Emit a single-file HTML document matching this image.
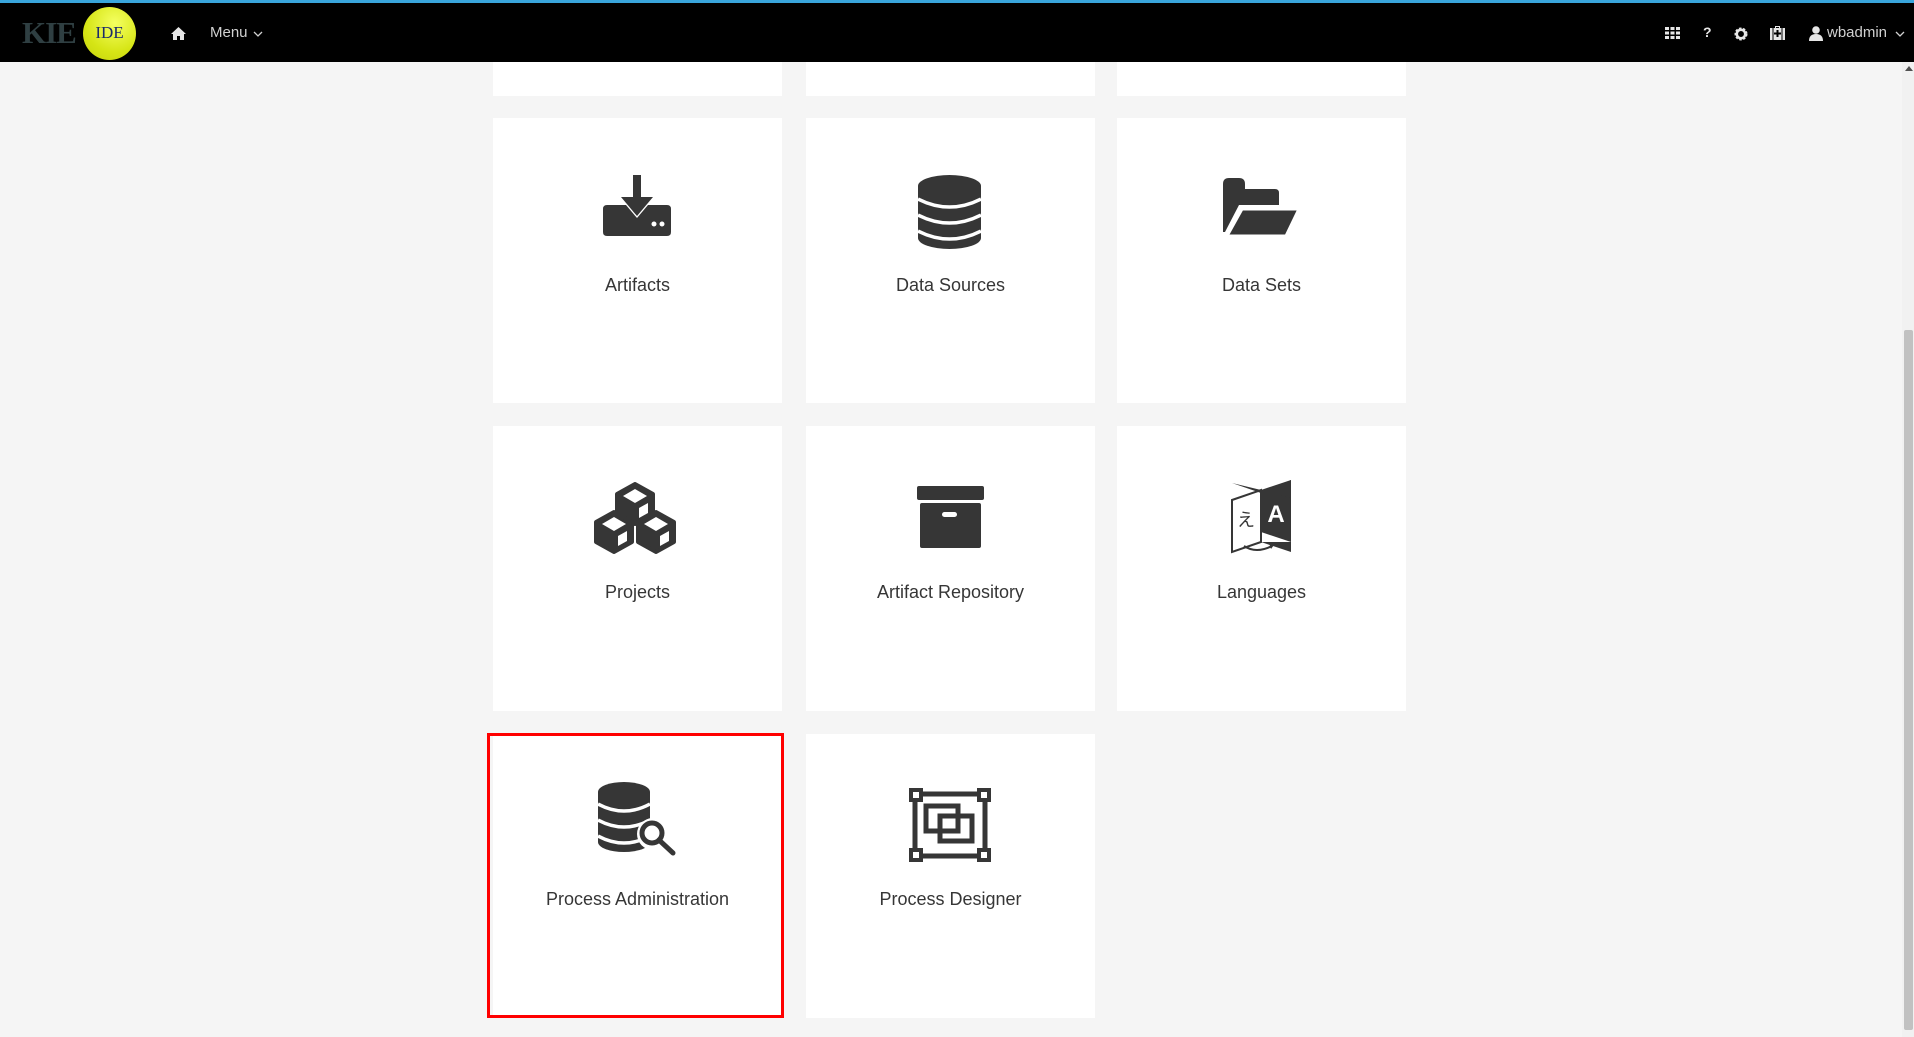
<!DOCTYPE html>
<html><head><meta charset="utf-8"><style>
*{margin:0;padding:0;box-sizing:border-box}
body{width:1914px;height:1037px;overflow:hidden;background:#f5f5f5;font-family:"Liberation Sans",sans-serif;position:relative}
.hdr{position:absolute;left:0;top:0;width:1914px;height:62px;background:#000;border-top:3px solid #39a5dc}
.card{position:absolute;background:#fff;width:289px}
.lbl{position:absolute;width:289px;text-align:center;font-size:18px;color:#363636}
svg{position:absolute}
.t{position:absolute;color:#d1d1d1;font-size:15px}
</style></head><body>
<div class="hdr"></div>
<div style="position:absolute;left:22px;top:15px;font-family:'Liberation Serif',serif;font-size:31px;color:#2f3f42;letter-spacing:-1px;font-weight:bold">KIE</div>
<div style="position:absolute;left:83px;top:7px;width:53px;height:53px;border-radius:50%;background:radial-gradient(circle at 60% 30%,#f4ff60,#d6e515 60%,#c4d10d);"></div>
<div style="position:absolute;left:83px;top:23px;width:53px;text-align:center;font-family:'Liberation Serif',serif;font-size:17px;color:#1b2a6b">IDE</div>
<svg style="left:171px;top:27px" width="15" height="13" viewBox="0 0 15 13"><path d="M7.5 0L0 7h2v6h4V9h3v4h4V7h2z" fill="#e6e6e6"/></svg>
<div class="t" style="left:210px;top:24px">Menu</div>
<svg style="left:253px;top:31px" width="10" height="6" viewBox="0 0 10 6"><path d="M1 1l4 4 4-4" fill="none" stroke="#d1d1d1" stroke-width="1.3"/></svg>
<svg style="left:1665px;top:27px" width="15" height="12" viewBox="0 0 15 12" fill="#e6e6e6"><rect x="0" y="0" width="4" height="3"/><rect x="5.5" y="0" width="4" height="3"/><rect x="11" y="0" width="4" height="3"/><rect x="0" y="4.5" width="4" height="3"/><rect x="5.5" y="4.5" width="4" height="3"/><rect x="11" y="4.5" width="4" height="3"/><rect x="0" y="9" width="4" height="3"/><rect x="5.5" y="9" width="4" height="3"/><rect x="11" y="9" width="4" height="3"/></svg>
<div style="position:absolute;left:1703px;top:24px;color:#e6e6e6;font-size:14px;font-weight:bold">?</div>
<svg style="left:1734px;top:27px" width="14" height="14" viewBox="0 0 14 14"><circle cx="7" cy="7" r="5" fill="none" stroke="#e6e6e6" stroke-width="3" stroke-dasharray="2.2 1.4"/><circle cx="7" cy="7" r="4.2" fill="none" stroke="#e6e6e6" stroke-width="2.5"/></svg>
<svg style="left:1770px;top:26px" width="15" height="14" viewBox="0 0 15 14"><path d="M5 2V0h5v2h5v12H0V2z M6 1v1h3V1z" fill="#e6e6e6"/><path d="M6.5 4h2v2.5H11v2H8.5V11h-2V8.5H4v-2h2.5z" fill="#000"/><rect x="2.5" y="2" width="1" height="12" fill="#000"/><rect x="11.5" y="2" width="1" height="12" fill="#000"/></svg>
<svg style="left:1809px;top:26px" width="14" height="15" viewBox="0 0 14 15"><circle cx="7" cy="4" r="3.8" fill="#e6e6e6"/><path d="M0 15q0-7 7-7t7 7z" fill="#e6e6e6"/></svg>
<div class="t" style="left:1827px;top:24px">wbadmin</div>
<svg style="left:1895px;top:31px" width="10" height="6" viewBox="0 0 10 6"><path d="M1 1l4 4 4-4" fill="none" stroke="#d1d1d1" stroke-width="1.3"/></svg>

<div class="card" style="left:493px;top:62px;height:34px"></div>
<div class="card" style="left:806px;top:62px;height:34px"></div>
<div class="card" style="left:1117px;top:62px;height:34px"></div>

<div class="card" style="left:493px;top:118px;height:285px"></div>
<div class="card" style="left:806px;top:118px;height:285px"></div>
<div class="card" style="left:1117px;top:118px;height:285px"></div>
<div class="card" style="left:493px;top:426px;height:285px"></div>
<div class="card" style="left:806px;top:426px;height:285px"></div>
<div class="card" style="left:1117px;top:426px;height:285px"></div>
<div class="card" style="left:493px;top:734px;height:284px"></div>
<div class="card" style="left:806px;top:734px;height:284px"></div>
<div style="position:absolute;left:487px;top:733px;width:297px;height:285px;border:3px solid #f00"></div>

<div class="lbl" style="left:493px;top:275px">Artifacts</div>
<div class="lbl" style="left:806px;top:275px">Data Sources</div>
<div class="lbl" style="left:1117px;top:275px">Data Sets</div>
<div class="lbl" style="left:493px;top:582px">Projects</div>
<div class="lbl" style="left:806px;top:582px">Artifact Repository</div>
<div class="lbl" style="left:1117px;top:582px">Languages</div>
<div class="lbl" style="left:493px;top:889px">Process Administration</div>
<div class="lbl" style="left:806px;top:889px">Process Designer</div>

<svg style="left:603px;top:175px" width="68" height="61" viewBox="0 0 68 61" fill="#363636"><rect x="30" y="0" width="8" height="22"/><path d="M18 22H50L34 41z"/><path d="M0 34q0-4 4-4h19l11 13l11-13h19q4 0 4 4v23q0 4-4 4H4q-4 0-4-4z"/><circle cx="51" cy="49" r="2.5" fill="#fff"/><circle cx="59" cy="49" r="2.5" fill="#fff"/></svg>
<svg style="left:918px;top:175px" width="63" height="74" viewBox="0 0 63 74"><path d="M0 11a31.5 11 0 0 1 63 0v52a31.5 11 0 0 1-63 0z" fill="#363636"/><g fill="none" stroke="#fff" stroke-width="3.5"><path d="M0 24q31.5 16 63 0"/><path d="M0 40q31.5 16 63 0"/><path d="M0 56q31.5 16 63 0"/></g></svg>
<svg style="left:1223px;top:178px" width="76" height="58" viewBox="0 0 76 58" fill="#363636"><path d="M0 6q0-6 6-6h10q6 0 6 6v5h30q4 0 4 4v12H16L2 54H0z"/><path d="M19 31H76L63 58H4z" stroke="#fff" stroke-width="3"/></svg>
<svg style="left:591px;top:482px" width="88" height="72" viewBox="0 0 88 72"><g fill="#363636" stroke="#363636" stroke-width="4" stroke-linejoin="round"><path d="M44 2L62 12V32L44 42L26 32V12z"/><path d="M23 30L41 40V60L23 70L5 60V40z"/><path d="M65 30L83 40V60L65 70L47 60V40z"/></g><g fill="#fff"><path d="M44 7L56 14L44 21L32 14z"/><path d="M48 26L57 21V31L48 36z"/><path d="M23 35L35 42L23 49L11 42z"/><path d="M27 54L36 49V59L27 64z"/><path d="M65 35L77 42L65 49L53 42z"/><path d="M69 54L78 49V59L69 64z"/></g></svg>
<svg style="left:917px;top:486px" width="67" height="62" viewBox="0 0 67 62" fill="#363636"><rect x="0" y="0" width="67" height="14" rx="2"/><rect x="3" y="17" width="61" height="45" rx="2"/><rect x="25" y="26" width="15" height="5" rx="2.5" fill="#fff"/></svg>
<svg style="left:1229px;top:480px" width="65" height="76" viewBox="0 0 65 76"><path d="M3 20L32 10V62L3 72z" fill="#fff" stroke="#363636" stroke-width="2"/><path d="M32 10L62 0V62L32 52z" fill="#363636"/><path d="M3 3L32 13L62 0V18L32 10z" fill="#363636"/><path d="M32 62L62 72V62z" fill="#363636"/><text x="47" y="42" text-anchor="middle" font-family="Liberation Sans" font-weight="bold" font-size="24" fill="#fff">A</text><text x="17" y="46" text-anchor="middle" font-family="Noto Sans CJK JP,sans-serif" font-size="18" fill="#363636">え</text><path d="M15 66q12 8 28 0" fill="none" stroke="#363636" stroke-width="2"/><path d="M40 63l5 2l-3 4z" fill="#363636"/></svg>
<svg style="left:598px;top:782px" width="80" height="76" viewBox="0 0 80 76"><path d="M0 10a26 10 0 0 1 52 0v50a26 10 0 0 1-52 0z" fill="#363636"/><g fill="none" stroke="#fff" stroke-width="3.5"><path d="M0 22q26 14 52 0"/><path d="M0 38q26 14 52 0"/><path d="M0 54q26 14 52 0"/></g><circle cx="55" cy="52" r="16" fill="#fff"/><circle cx="54" cy="51" r="10" fill="#fff" stroke="#363636" stroke-width="5"/><path d="M61 58L75 71" stroke="#363636" stroke-width="5" stroke-linecap="round"/></svg>
<svg style="left:909px;top:788px" width="82" height="74" viewBox="0 0 82 74"><g fill="none" stroke="#363636" stroke-width="5"><rect x="6" y="6" width="70" height="62"/><rect x="17" y="18" width="32" height="25"/><rect x="31" y="28" width="32" height="25"/></g><g fill="#363636"><rect x="0" y="0" width="14" height="14"/><rect x="68" y="0" width="14" height="14"/><rect x="0" y="60" width="14" height="14"/><rect x="68" y="60" width="14" height="14"/></g><g fill="#fff"><rect x="4" y="4" width="6" height="6"/><rect x="72" y="4" width="6" height="6"/><rect x="4" y="64" width="6" height="6"/><rect x="72" y="64" width="6" height="6"/></g></svg>

<div style="position:absolute;left:1902px;top:62px;width:12px;height:975px;background:#f1f1f1"></div>
<div style="position:absolute;left:1904px;top:330px;width:9px;height:700px;background:#c1c1c1;border-radius:2px"></div>
<div style="position:absolute;left:1905px;top:66px;width:0;height:0;border-left:4px solid transparent;border-right:4px solid transparent;border-bottom:5px solid #505050"></div>
</body></html>
